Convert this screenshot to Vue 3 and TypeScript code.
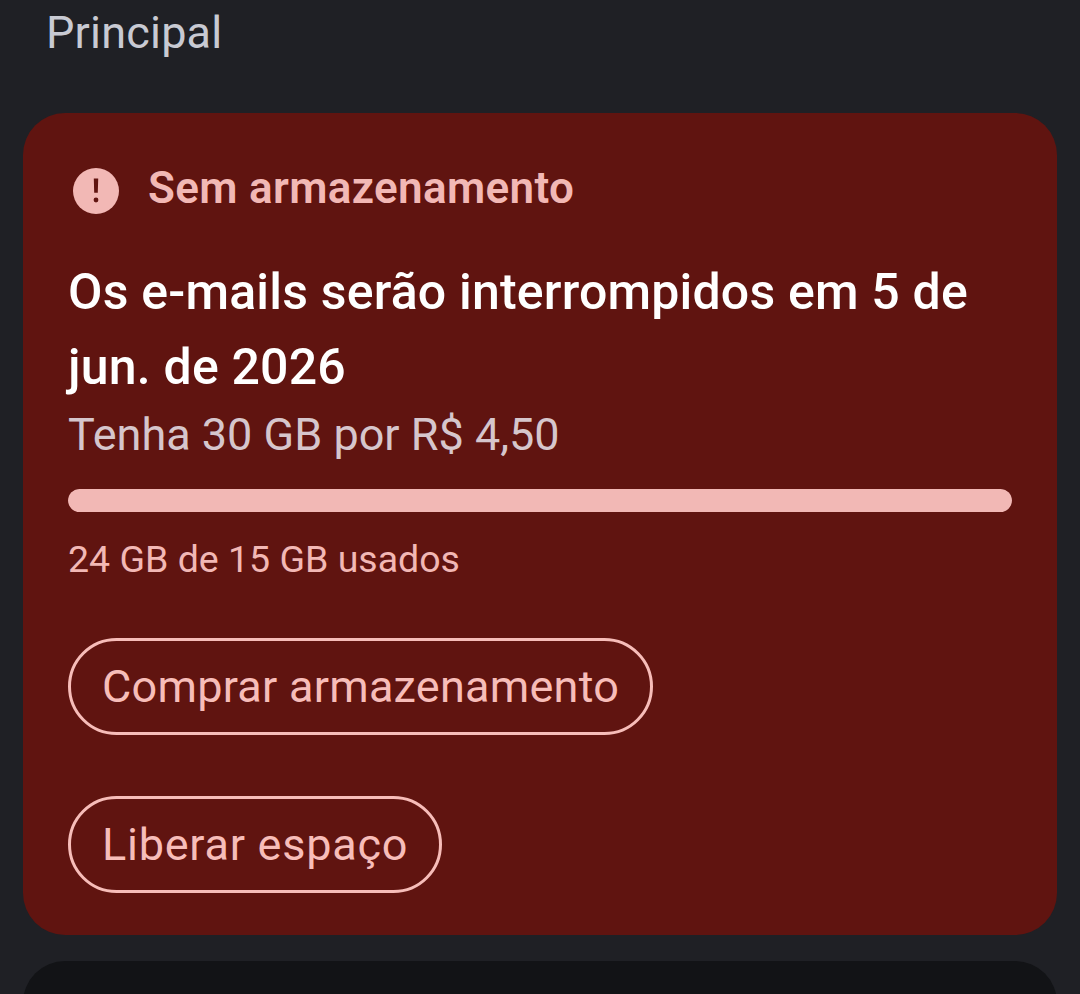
<template>
  <div class="page">
    <h2 class="section-title">Principal</h2>

    <section class="storage-card">
      <div class="alert-row">
        <svg class="alert-icon" viewBox="0 0 46 46" aria-hidden="true">
          <circle cx="23" cy="23" r="23" fill="#f2b8b5" />
          <path d="M20.8 10.5h4.4l-.4 14.2h-3.6z" fill="#601410" />
          <circle cx="23" cy="32" r="2.4" fill="#601410" />
        </svg>
        <span class="alert-label">Sem armazenamento</span>
      </div>

      <h3 class="headline">Os e-mails serão interrompidos em 5 de jun. de 2026</h3>
      <p class="offer">Tenha 30 GB por R$ 4,50</p>

      <div class="meter"><div class="meter-fill" :style="{ width: usedPercent + '%' }"></div></div>
      <p class="usage">24 GB de 15 GB usados</p>

      <div class="actions">
        <button class="action" type="button">Comprar armazenamento</button>
        <button class="action action-short" type="button">Liberar espaço</button>
      </div>
    </section>

    <section class="next-card"></section>
  </div>
</template>

<script setup lang="ts">
const used = 24;
const total = 15;
const usedPercent = Math.min(100, (used / total) * 100);
</script>

<style>
html,
body {
  margin: 0;
  background: #1f2025;
}
</style>

<style scoped>
.page {
  height: 994px;
  overflow: hidden;
  box-sizing: border-box;
  padding: 0 23px;
  background: #1f2025;
  font-family: Roboto, "Noto Sans", sans-serif;
}

.section-title {
  margin: 0 0 0 23px;
  padding-top: 6px;
  height: 113px;
  box-sizing: border-box;
  font-size: 45px;
  line-height: 54px;
  font-weight: 400;
  letter-spacing: 0.2px;
  color: #c8cad3;
}

.storage-card {
  box-sizing: border-box;
  height: 822px;
  padding: 51px 45px 0;
  border-radius: 42px;
  background: #601410;
}

.alert-row {
  display: flex;
  align-items: center;
  gap: 29px;
  margin-left: 5px;
  height: 48px;
}

.alert-icon {
  width: 46px;
  height: 46px;
  margin-top: 6px;
  flex: none;
}

.alert-label {
  font-size: 44px;
  font-weight: 600;
  letter-spacing: 0.35px;
  color: #f2b8b5;
}

.headline {
  margin: 43px 0 0;
  font-size: 50px;
  line-height: 75px;
  font-weight: 500;
  letter-spacing: 0.2px;
  color: #fff;
}

.offer {
  margin: 3px 0 0;
  font-size: 45px;
  line-height: 54px;
  font-weight: 400;
  color: #d6c6cc;
}

.meter {
  height: 23px;
  margin-top: 27px;
  border-radius: 12px;
  background: #8c4a47;
  overflow: hidden;
}

.meter-fill {
  height: 100%;
  border-radius: 12px;
  background: #f2b8b5;
}

.usage {
  margin: 26px 0 0;
  font-size: 37.5px;
  line-height: 42px;
  font-weight: 400;
  color: #f2b8b5;
}

.actions {
  display: flex;
  flex-direction: column;
  align-items: flex-start;
  gap: 61px;
  margin-top: 58px;
}

.action {
  height: 97px;
  padding: 0 31px;
  border: 3px solid #f7bdb9;
  border-radius: 49px;
  background: transparent;
  font-family: inherit;
  font-size: 45px;
  font-weight: 400;
  letter-spacing: 0.25px;
  color: #f7bdb9;
}

.action-short {
  letter-spacing: 0.75px;
}

.next-card {
  height: 100px;
  margin-top: 26px;
  border-radius: 42px;
  background: #121316;
}
</style>
